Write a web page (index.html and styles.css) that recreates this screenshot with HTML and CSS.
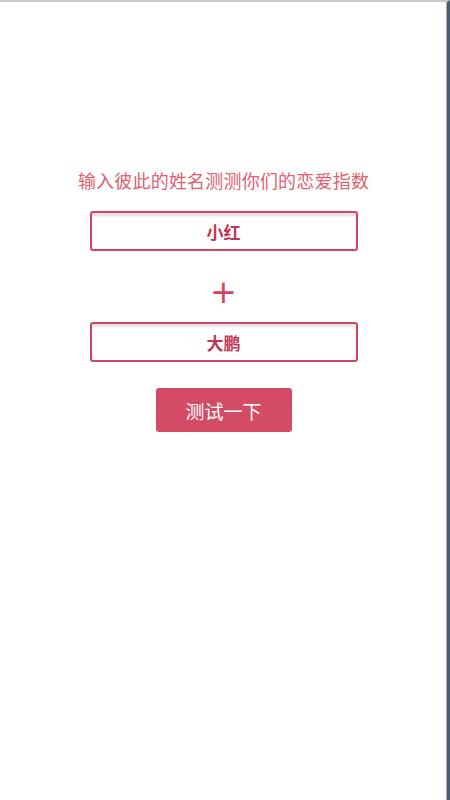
FILE: index.html
```html
<!DOCTYPE html>
<html lang="zh">
<head>
<meta charset="utf-8">
<link rel="stylesheet" href="styles.css">
</head>
<body>
<div class="frame">
  <main class="page">
    <h1 class="title">输入彼此的姓名测测你们的恋爱指数</h1>
    <input class="name" type="text" value="小红">
    <div class="plus">+</div>
    <input class="name" type="text" value="大鹏">
    <button class="go">测试一下</button>
  </main>
</div>
</body>
</html>
```
FILE: styles.css
```css
html, body {
  margin: 0;
  padding: 0;
  height: 100%;
  background: #ffffff;
}
body {
  font-family: "Noto Sans CJK SC", "Liberation Sans", sans-serif;
}
.frame {
  height: 800px;
  box-sizing: border-box;
  border-top: 2px solid #c9c9c9;
  border-right: 3px solid #4d5d72;
  box-shadow: inset -1px 0 0 #a3aebb;
}
.page {
  display: flex;
  flex-direction: column;
  align-items: center;
  padding-top: 164px;
}
.title {
  margin: 0;
  font-size: 18px;
  font-weight: normal;
  line-height: 28px;
  color: #e0606f;
  letter-spacing: 0.2px;
}
.name {
  margin-top: 17px;
  width: 268px;
  height: 40px;
  box-sizing: border-box;
  border: 2px solid #d3445f;
  border-radius: 3px;
  box-shadow: inset 0 3px 3px rgba(0,0,0,0.12);
  text-align: center;
  font-family: "Noto Sans CJK SC", sans-serif;
  font-size: 17px;
  font-weight: bold;
  color: #c23654;
  outline: none;
  background: #fff;
  padding: 0;
}
.plus {
  margin-top: 26px;
  margin-bottom: -2px;
  font-size: 32px;
  line-height: 30px;
  color: #d3445f;
  font-family: "DejaVu Sans", sans-serif;
}
.go {
  margin-top: 26px;
  width: 136px;
  height: 44px;
  border: none;
  border-radius: 3px;
  background: #d44b66;
  color: #ffffff;
  font-family: "Noto Sans CJK SC", sans-serif;
  font-size: 19px;
  padding: 0;
}
```
